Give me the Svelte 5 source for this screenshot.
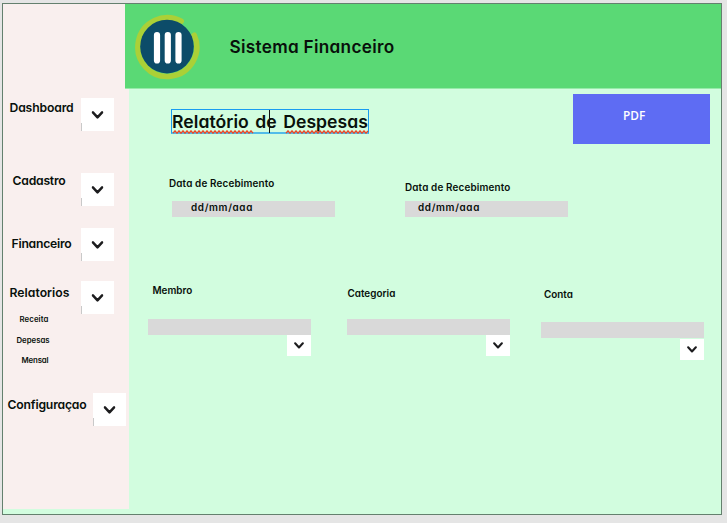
<script>
  const menu = [
    { label: 'Dashboard', gap: 94, left: 6.5, width: 64, drop: 2, box: 78 },
    { label: 'Cadastro', gap: 42, left: 9.5, width: 53, drop: 0, box: 78 },
    { label: 'Financeiro', gap: 22, left: 8.5, width: 60, drop: 8, box: 78 },
    {
      label: 'Relatorios', gap: 20, left: 6.5, width: 60, drop: 4, box: 78,
      children: [
        { label: 'Receita', left: 16.5, width: 29 },
        { label: 'Depesas', left: 13.5, width: 33 },
        { label: 'Mensal', left: 18.5, width: 27 }
      ]
    },
    { label: 'Configuraçao', gap: 18, left: 4.5, width: 79, drop: 4, box: 90 }
  ];

  const dates = [
    { label: 'Data de Recebimento', left: 40, width: 105.5, top: 0, inset: 3, pad: 19 },
    { label: 'Data de Recebimento', left: 70, width: 105.5, top: 4, inset: 0, pad: 13 }
  ];

  const selects = [
    { label: 'Membro', left: 19.4, width: 40, top: 0, indent: 4, barTop: 36, drop: 0 },
    { label: 'Categoria', left: 36, width: 48, top: 3, indent: 0, barTop: 36, drop: 0 },
    { label: 'Conta', left: 31, width: 29, top: 4, indent: 2.5, barTop: 39, drop: 1 }
  ];

  // Tracks the text so that it spans the given width.
  function fit(node, width) {
    const natural = node.getBoundingClientRect().width;
    node.style.letterSpacing = (width - natural) / node.textContent.length + 'px';
  }

  function wave(from, to) {
    let d = `M${from} 3.1`;
    let up = true;
    for (let x = from + 2; x <= to; x += 2) {
      d += `L${x} ${up ? 0.9 : 3.1}`;
      up = !up;
    }
    return d;
  }
</script>

{#snippet chevron()}
  <svg class="chevron" viewBox="0 0 12 8"><path d="M1.4 1.4 6 6.3l4.6-4.9" /></svg>
{/snippet}

<div class="page">
  <div class="frame">
    <nav>
      {#each menu as item}
        <div class="row" style="margin-top:{item.gap}px">
          <div class="cell" style="width:{item.box}px;padding-left:{item.left}px;padding-top:{item.drop}px">
            <span class="item" use:fit={item.width}>{item.label}</span>
          </div>
          <button class="toggle" aria-label={item.label}>{@render chevron()}</button>
        </div>
        {#if item.children}
          <div class="sub">
            {#each item.children as child}
              <div class="child" style="padding-left:{child.left}px">
                <span use:fit={child.width}>{child.label}</span>
              </div>
            {/each}
          </div>
        {/if}
      {/each}
    </nav>

    <main>
      <header>
        <svg class="logo" viewBox="0 0 66 68">
          <path d="M60.2 22.2A29.4 29.4 0 1 1 47.2 8.2" fill="none" stroke="#abd037" stroke-width="5.6" stroke-linecap="round" />
          <circle cx="33" cy="33.6" r="26.8" fill="#0c4c69" />
          <path d="M23 22v25.5M33.8 22v25.5M44.5 22v25.5" stroke="#fff" stroke-width="6.2" stroke-linecap="round" />
        </svg>
        <h1><span use:fit={165}>Sistema Financeiro</span></h1>
      </header>

      <section class="top">
        <div class="title">
          <h2><span use:fit={196}>Relatório de Despesas</span></h2>
          <svg class="spell" viewBox="0 0 198 4">
            <path d={wave(2, 83)} />
            <path d={wave(115, 197)} />
          </svg>
          <i class="caret"></i>
        </div>
        <button class="pdf"><span use:fit={22.4}>PDF</span></button>
      </section>

      <section class="dates">
        {#each dates as d}
          <div class="date" style="margin-left:{d.left}px">
            <div class="label" style="padding-top:{d.top}px"><span use:fit={d.width}>{d.label}</span></div>
            <div class="field" style="margin-left:{d.inset}px;padding-left:{d.pad}px"><span use:fit={62}>dd/mm/aaa</span></div>
          </div>
        {/each}
      </section>

      <section class="selects">
        {#each selects as s}
          <div class="select" style="margin-left:{s.left}px">
            <div class="label" style="height:{s.barTop}px;padding-top:{s.top}px;padding-left:{s.indent}px">
              <span use:fit={s.width}>{s.label}</span>
            </div>
            <div class="bar"></div>
            <button class="drop" aria-label={s.label} style="margin-top:{s.drop}px">{@render chevron()}</button>
          </div>
        {/each}
      </section>
    </main>
  </div>
</div>

<style>
  :global(body) { margin: 0; background: #e5e5e5; }
  .page, .page :global(*) { box-sizing: border-box; }
  .page {
    width: 727px;
    height: 523px;
    padding: 3px 0 0 2px;
    overflow: hidden;
    background: #e5e5e5;
    color: #08100b;
    font-family: Inter, 'Open Sans', sans-serif;
    font-feature-settings: 'cv11' 1;
    font-weight: 600;
  }
  .frame {
    display: flex;
    width: 720px;
    height: 512px;
    border: 1px solid #64806e;
    background: #d2fddf;
  }
  button { display: block; margin: 0; padding: 0; border: 0; font: inherit; }
  h1, h2 { margin: 0; font-weight: 600; }
  span { display: block; width: max-content; white-space: nowrap; }

  nav { flex: none; width: 126px; height: 505px; background: #f9efee; display: flow-root; }
  .row { display: flex; height: 33px; }
  .cell { flex: none; }
  .item { font-size: 12.2px; line-height: 16px; }
  .toggle {
    flex: none;
    width: 33px;
    height: 33px;
    background: linear-gradient(#c9c9c9, #c9c9c9) 0 100% / 1px 8px no-repeat, #fff;
  }
  .chevron { display: block; width: 12px; height: 8px; margin: 0 auto; fill: none; stroke: #1c1c1e; stroke-width: 2.5; stroke-linecap: round; stroke-linejoin: round; }
  .toggle .chevron { transform: translateX(-0.5px); }
  .sub { height: 61px; }
  .child { height: 20.7px; font-size: 7.8px; line-height: 11px; }

  main { flex: 1; min-width: 0; }
  header {
    display: flex;
    width: 596px;
    height: 85px;
    margin-left: -4px;
    border-bottom: 1px solid #96eba9;
    background: #5ad975;
    position: relative;
  }
  .logo { width: 66px; height: 68px; margin: 9px 0 0 9px; }
  h1 { margin: 31px 0 0 29.5px; font-size: 17.2px; line-height: 24px; }

  .top { display: flex; height: 86px; }
  .title { position: relative; width: 198px; height: 25px; margin: 20px 0 0 42px; border: 1px solid #189bf0; border-bottom: 2px solid #52bce9; }
  h2 { font-size: 17.6px; line-height: 23px; word-spacing: 2px; }
  .spell { position: absolute; left: -1px; top: 20px; width: 198px; height: 4px; fill: none; stroke: #ef4522; stroke-width: 1.4; }
  .caret { position: absolute; left: 97px; top: 0; width: 1px; height: 23px; background: #111; }
  .pdf {
    width: 136.5px;
    height: 50px;
    margin: 5px 0 0 204px;
    padding: 0 0 8px 50px;
    background: #5e6cf3;
    color: #fff;
    text-align: left;
    font: 600 11.8px/16px 'Open Sans', sans-serif;
  }

  .label { font-size: 9.9px; line-height: 14px; }
  .dates { display: flex; height: 108px; padding-top: 1px; }
  .date .label { height: 25px; }
  .date { flex: none; width: 166px; }
  .date + .date { width: 163px; }
  .field { width: 163px; height: 16px; background: #d9d9d9; font-size: 9.9px; line-height: 13px; }

  .selects { display: flex; }
  .select { width: 163px; }
  .bar { height: 16px; background: #d9d9d9; }
  .drop { width: 24px; height: 21px; margin-left: 139px; background: #fff; }
  .drop .chevron { width: 10px; height: 7px; }
</style>
